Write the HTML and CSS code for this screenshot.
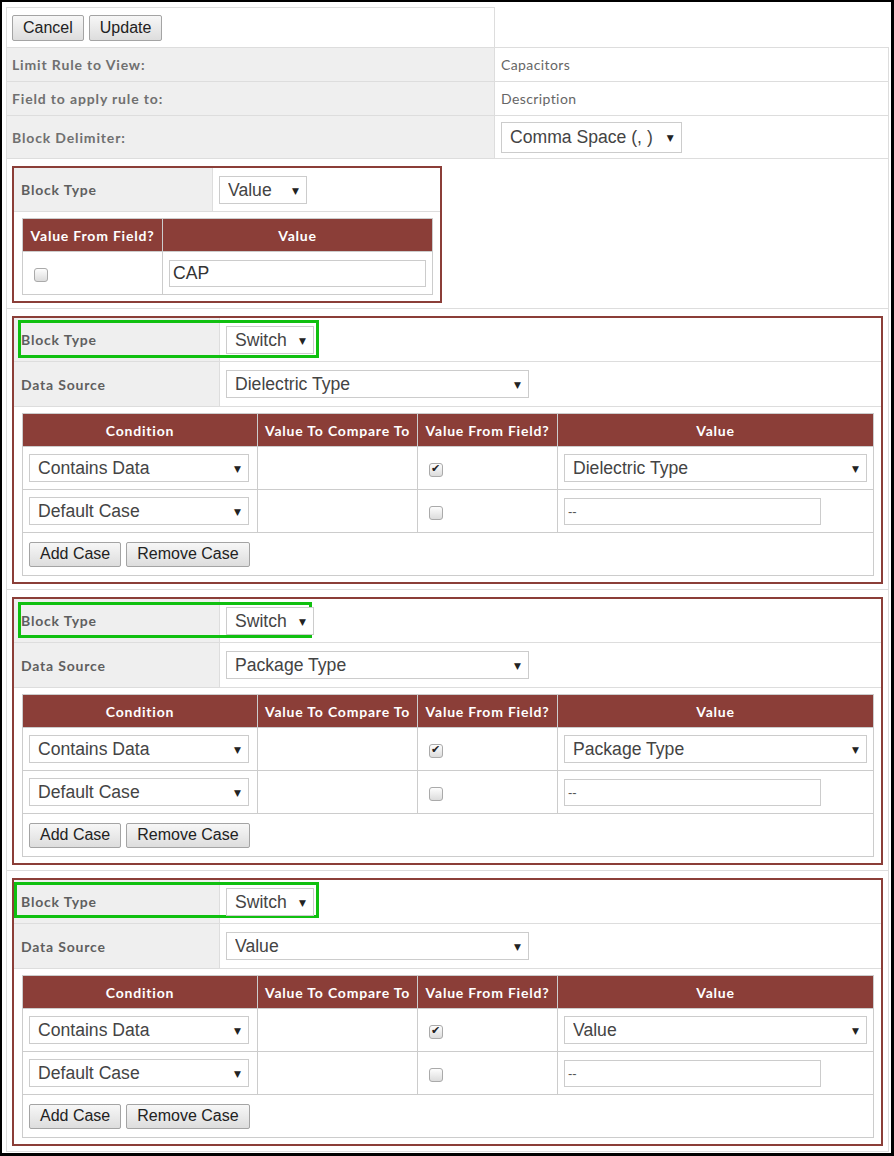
FILE: index.html
```html
<!DOCTYPE html>
<html lang="en">
<head>
    <meta charset="UTF-8">
    <title>Edit Rule</title>
    <link rel="stylesheet" href="styles.css">
</head>
<body>
<div class="screen">
    <table class="rule-table">
        <colgroup>
            <col class="col-label">
            <col class="col-field">
        </colgroup>
        <tr>
            <td class="actions">
                <div class="btn-row">
                    <button class="btn">Cancel</button>
                    <button class="btn">Update</button>
                </div>
            </td>
        </tr>
        <tr>
            <th class="label">Limit Rule to View:</th>
            <td class="info">Capacitors</td>
        </tr>
        <tr>
            <th class="label">Field to apply rule to:</th>
            <td class="info">Description</td>
        </tr>
        <tr class="row-delim">
            <th class="label">Block Delimiter:</th>
            <td class="info">
                <span class="select w-delim"><select><option>Comma Space (, )</option></select></span>
            </td>
        </tr>

        <!-- value block -->
        <tr>
            <td colspan="2" class="block-cell">
                <table class="block block-small">
                    <tr>
                        <th class="block-label bl-small">Block Type</th>
                        <td class="block-field">
                            <span class="select w-type"><select><option>Value</option></select></span>
                        </td>
                    </tr>
                    <tr>
                        <td colspan="2" class="block-body">
                            <table class="cases cases-small">
                                <tr>
                                    <th class="c-from-sm">Value From Field?</th>
                                    <th>Value</th>
                                </tr>
                                <tr>
                                    <td><input type="checkbox" class="chk"></td>
                                    <td><input type="text" class="txt" value="CAP"></td>
                                </tr>
                            </table>
                        </td>
                    </tr>
                </table>
            </td>
        </tr>

        <!-- switch blocks -->
        <tr>
            <td colspan="2" class="block-cell">
                <div class="block-wrap">
                    <span class="highlight hl-1"></span>
                    <table class="block">
                        <tr class="row-type">
                            <th class="block-label">Block Type</th>
                            <td class="block-field">
                                <span class="select w-type"><select><option>Switch</option></select></span>
                            </td>
                        </tr>
                        <tr class="row-source">
                            <th class="block-label">Data Source</th>
                            <td class="block-field">
                                <span class="select w-wide"><select><option>Dielectric Type</option></select></span>
                            </td>
                        </tr>
                        <tr>
                            <td colspan="2" class="block-body">
                                <table class="cases">
                                    <tr>
                                        <th class="c-cond">Condition</th>
                                        <th class="c-cmp">Value To Compare To</th>
                                        <th class="c-from">Value From Field?</th>
                                        <th>Value</th>
                                    </tr>
                                    <tr>
                                        <td><span class="select w-cond"><select><option>Contains Data</option></select></span></td>
                                        <td></td>
                                        <td><input type="checkbox" class="chk" checked></td>
                                        <td><span class="select w-wide"><select><option>Dielectric Type</option></select></span></td>
                                    </tr>
                                    <tr>
                                        <td><span class="select w-cond"><select><option>Default Case</option></select></span></td>
                                        <td></td>
                                        <td><input type="checkbox" class="chk"></td>
                                        <td><input type="text" class="txt txt-dash" value="--"></td>
                                    </tr>
                                    <tr>
                                        <td colspan="4" class="case-actions">
                                            <div class="btn-row">
                                                <button class="btn btn-sm">Add Case</button>
                                                <button class="btn btn-sm">Remove Case</button>
                                            </div>
                                        </td>
                                    </tr>
                                </table>
                            </td>
                        </tr>
                    </table>
                </div>
            </td>
        </tr>

        <tr>
            <td colspan="2" class="block-cell">
                <div class="block-wrap">
                    <span class="highlight hl-2"></span>
                    <table class="block">
                        <tr class="row-type">
                            <th class="block-label">Block Type</th>
                            <td class="block-field">
                                <span class="select w-type"><select><option>Switch</option></select></span>
                            </td>
                        </tr>
                        <tr class="row-source">
                            <th class="block-label">Data Source</th>
                            <td class="block-field">
                                <span class="select w-wide"><select><option>Package Type</option></select></span>
                            </td>
                        </tr>
                        <tr>
                            <td colspan="2" class="block-body">
                                <table class="cases">
                                    <tr>
                                        <th class="c-cond">Condition</th>
                                        <th class="c-cmp">Value To Compare To</th>
                                        <th class="c-from">Value From Field?</th>
                                        <th>Value</th>
                                    </tr>
                                    <tr>
                                        <td><span class="select w-cond"><select><option>Contains Data</option></select></span></td>
                                        <td></td>
                                        <td><input type="checkbox" class="chk" checked></td>
                                        <td><span class="select w-wide"><select><option>Package Type</option></select></span></td>
                                    </tr>
                                    <tr>
                                        <td><span class="select w-cond"><select><option>Default Case</option></select></span></td>
                                        <td></td>
                                        <td><input type="checkbox" class="chk"></td>
                                        <td><input type="text" class="txt txt-dash" value="--"></td>
                                    </tr>
                                    <tr>
                                        <td colspan="4" class="case-actions">
                                            <div class="btn-row">
                                                <button class="btn btn-sm">Add Case</button>
                                                <button class="btn btn-sm">Remove Case</button>
                                            </div>
                                        </td>
                                    </tr>
                                </table>
                            </td>
                        </tr>
                    </table>
                </div>
            </td>
        </tr>

        <tr>
            <td colspan="2" class="block-cell">
                <div class="block-wrap">
                    <span class="highlight hl-3"></span>
                    <table class="block">
                        <tr class="row-type">
                            <th class="block-label">Block Type</th>
                            <td class="block-field">
                                <span class="select w-type"><select><option>Switch</option></select></span>
                            </td>
                        </tr>
                        <tr class="row-source">
                            <th class="block-label">Data Source</th>
                            <td class="block-field">
                                <span class="select w-wide"><select><option>Value</option></select></span>
                            </td>
                        </tr>
                        <tr>
                            <td colspan="2" class="block-body">
                                <table class="cases">
                                    <tr>
                                        <th class="c-cond">Condition</th>
                                        <th class="c-cmp">Value To Compare To</th>
                                        <th class="c-from">Value From Field?</th>
                                        <th>Value</th>
                                    </tr>
                                    <tr>
                                        <td><span class="select w-cond"><select><option>Contains Data</option></select></span></td>
                                        <td></td>
                                        <td><input type="checkbox" class="chk" checked></td>
                                        <td><span class="select w-wide"><select><option>Value</option></select></span></td>
                                    </tr>
                                    <tr>
                                        <td><span class="select w-cond"><select><option>Default Case</option></select></span></td>
                                        <td></td>
                                        <td><input type="checkbox" class="chk"></td>
                                        <td><input type="text" class="txt txt-dash" value="--"></td>
                                    </tr>
                                    <tr>
                                        <td colspan="4" class="case-actions">
                                            <div class="btn-row">
                                                <button class="btn btn-sm">Add Case</button>
                                                <button class="btn btn-sm">Remove Case</button>
                                            </div>
                                        </td>
                                    </tr>
                                </table>
                            </td>
                        </tr>
                    </table>
                </div>
            </td>
        </tr>
    </table>
</div>
</body>
</html>
```

FILE: styles.css
```css
body {
    margin: 0;
    background: #fff;
    font-family: Lato, "Open Sans", sans-serif;
}
.screen {
    box-sizing: border-box;
    width: 894px;
    height: 1156px;
    border: 2px solid #000;
    border-right-width: 3px;
    border-bottom-width: 3px;
    overflow: hidden;
    background: #fff;
}
.rule-table {
    border-collapse: collapse;
    table-layout: fixed;
    width: 883px;
    margin: 5px 0 0 4px;
}
.col-label {
    width: 488px;
}
.rule-table > tbody > tr > td,
.rule-table > tbody > tr > th {
    border: 1px solid #ddd;
}
.actions {
    height: 39px;
    padding: 0 5px;
}
.btn-row {
    display: flex;
    gap: 5px;
}
.btn {
    font: 16px "Liberation Sans", Arial, sans-serif;
    color: #222;
    height: 26px;
    padding: 0 10px;
    border: 1px solid #a4a4a4;
    border-radius: 2px;
    background: linear-gradient(#f7f7f7, #dddddd);
}
.btn-sm {
    height: 25px;
}
.label {
    background: #efefef;
    color: #707070;
    font-weight: bold;
    font-size: 14px;
    letter-spacing: 0.85px;
    text-align: left;
    padding: 0 5px;
    height: 33px;
}
.info {
    color: #666;
    font-size: 14px;
    letter-spacing: 0.4px;
    padding: 0 6px;
}
.row-delim .label {
    height: 42px;
}

/* selects */
.select {
    position: relative;
    display: inline-block;
    vertical-align: middle;
}
.select select {
    -webkit-appearance: none;
    appearance: none;
    box-sizing: border-box;
    width: 100%;
    height: 28px;
    padding: 0 20px 0 8px;
    font: 17.6px "Liberation Sans", Arial, sans-serif;
    color: #444;
    background: #fff;
    border: 1px solid #ccc;
    border-radius: 0;
}
.select::after {
    content: "\25BC";
    position: absolute;
    right: 8px;
    top: 50%;
    transform: translateY(-45%);
    font: 9px "DejaVu Sans", sans-serif;
    color: #222;
    pointer-events: none;
}
.w-delim { width: 181px; }
.w-delim select { height: 31px; }
.w-type { width: 88px; }
.w-wide { width: 303px; }
.w-cond { width: 220px; }

.txt {
    box-sizing: border-box;
    width: 257px;
    height: 27px;
    padding: 0 3px;
    font: 17.6px "Liberation Sans", Arial, sans-serif;
    color: #333;
    border: 1px solid #ccc;
    vertical-align: middle;
}
.txt-dash {
    font-size: 13px;
    color: #555;
}

.chk {
    -webkit-appearance: none;
    appearance: none;
    position: relative;
    width: 14px;
    height: 14px;
    margin: 0 0 0 5px;
    border: 1px solid #aaa;
    border-radius: 3px;
    background: linear-gradient(#fdfdfd, #dcdcdc);
    vertical-align: middle;
}
.chk:checked::after {
    content: "\2714";
    position: absolute;
    left: 1px;
    top: -2px;
    font: 11px "DejaVu Sans", sans-serif;
    color: #222;
}

/* blocks */
.block-cell {
    padding: 7px 5px 5px;
}
.block-wrap {
    position: relative;
}
.block {
    width: 100%;
    border: 2px solid #8b3e38;
    border-collapse: collapse;
}
.block-small {
    width: 430px;
}
.block-label {
    width: 191px;
    background: #efefef;
    color: #5f5f5f;
    font-size: 14px;
    letter-spacing: 0.8px;
    font-weight: bold;
    text-align: left;
    padding: 0 7px;
    border-right: 1px solid #ddd;
    border-bottom: 1px solid #ddd;
}
.bl-small {
    width: 184px;
}
.block-field {
    padding: 0 6px;
    border-bottom: 1px solid #ddd;
}
.row-type > * {
    height: 43px;
}
.row-source > * {
    height: 44px;
}
.block-small .block-label,
.block-small .block-field {
    height: 43px;
}
.block-body {
    padding: 6px 7px 6px 8px;
}

.cases {
    width: 100%;
    border-collapse: collapse;
}
.cases th {
    background: #8b3e38;
    color: #fff;
    font-size: 14px;
    letter-spacing: 0.8px;
    font-weight: bold;
    height: 32px;
    padding: 0 4px;
    border: 1px solid #ccc;
}
.cases td {
    height: 42px;
    padding: 0 6px;
    border: 1px solid #ccc;
}
.c-cond { width: 226px; }
.c-cmp { width: 151px; }
.c-from { width: 131px; }
.c-from-sm { width: 131px; }

.highlight {
    position: absolute;
    border: 3px solid #10c010;
    box-sizing: border-box;
    pointer-events: none;
}
.hl-1 { left: 6px; top: 4px; width: 301px; height: 38px; }
.hl-2 { left: 6px; top: 5px; width: 294px; height: 36px; }
.hl-3 { left: 2px; top: 4px; width: 305px; height: 36px; }
```
